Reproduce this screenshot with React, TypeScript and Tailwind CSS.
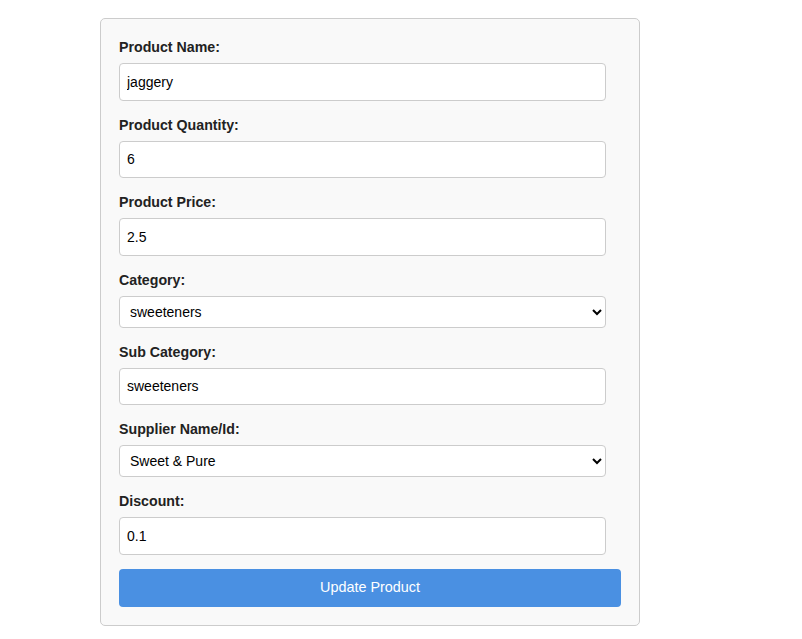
import React from 'react';

const fields = [
  { label: 'Product Name:', type: 'input', value: 'jaggery' },
  { label: 'Product Quantity:', type: 'input', value: '6' },
  { label: 'Product Price:', type: 'input', value: '2.5' },
  { label: 'Category:', type: 'select', value: 'sweeteners' },
  { label: 'Sub Category:', type: 'input', value: 'sweeteners' },
  { label: 'Supplier Name/Id:', type: 'select', value: 'Sweet & Pure' },
  { label: 'Discount:', type: 'input', value: '0.1' },
];

export default function App() {
  return (
    <div className="min-h-screen bg-white pt-[18px] pl-[100px] font-['Liberation_Sans',Arial,sans-serif] text-[#222]">
      <form
        className="w-[540px] rounded-[5px] border border-[#cccccc] bg-[#f9f9f9] p-[18px]"
        onSubmit={(e) => e.preventDefault()}
      >
        {fields.map((f) => (
          <div key={f.label} className="mb-[14px]">
            <label className="mb-[6px] block text-[14.2px] leading-[20px] font-bold text-[#222]">{f.label}</label>
            {f.type === 'input' ? (
              <input
                defaultValue={f.value}
                className="box-border block h-[37.5px] w-[487px] rounded-[4px] border border-[#cccccc] bg-white px-[7px] text-[14px] text-black outline-none"
              />
            ) : (
              <select
                defaultValue={f.value}
                className="box-border block h-[32px] w-[487px] rounded-[4px] border border-[#cccccc] bg-white px-[6px] text-[14px] text-black outline-none"
              >
                <option value={f.value}>{f.value}</option>
              </select>
            )}
          </div>
        ))}
        <button
          type="submit"
          className="block h-[38px] w-full rounded-[4px] bg-[#4a90e2] text-[14.4px] text-white"
        >
          Update Product
        </button>
      </form>
    </div>
  );
}
